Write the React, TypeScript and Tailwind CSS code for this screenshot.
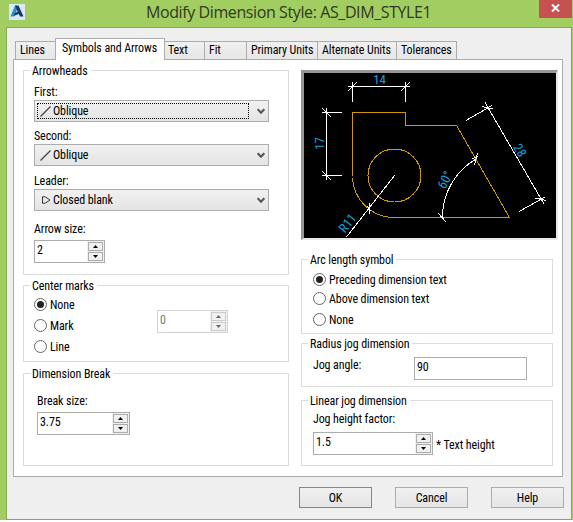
import { useState } from "react";

const leaderIcon = (
    <svg width="10" height="8" viewBox="0 0 10 8" fill="none" stroke="#333">
        <path d="M1.5 .7V7.3L4.5 7 9 4 4.5 1Z" />
    </svg>
);

const obliqueIcon = (
    <svg width="11" height="11" viewBox="0 0 11 11" stroke="#444" strokeWidth="1.2">
        <path d="M.5 10.5L10.5 .5" />
    </svg>
);

function Group({ title, className, children }: { title: string; className: string; children: React.ReactNode }) {
    return (
        <section className={`border border-[#dcdcdc] ${className}`}>
            <h2 className="-mt-2 ml-1.5 h-4 w-fit bg-white pr-[3px] pl-[2px]">{title}</h2>
            {children}
        </section>
    );
}

function Combo({ label, value, icon, focused }: { label: string; value: string; icon: React.ReactNode; focused?: boolean }) {
    return (
        <div>
            <div className="h-4">{label}</div>
            <button className="flex h-[22px] w-[235px] items-center border border-[#acacac] bg-linear-to-b from-[#f1f1f1] to-[#e4e4e4] pr-[3px] pl-[2px]">
                <span className={`flex h-4 w-[212px] items-center border ${focused ? "border-dotted border-black" : "border-transparent"}`}>
                    <span className="flex w-[15px] justify-center">{icon}</span>
                    <span>{value}</span>
                </span>
                <svg className="ml-auto" width="8" height="7" viewBox="0 0 8 7" fill="none" stroke="#555" strokeWidth="2">
                    <path d="M.7 1.2L4 4.8 7.3 1.2" />
                </svg>
            </button>
        </div>
    );
}

function Spinner({ value, width, disabled }: { value: string; width: string; disabled?: boolean }) {
    const arrow = disabled ? "#666" : "#000";
    return (
        <div className={`flex h-[23px] border bg-white ${width} ${disabled ? "border-[#d4d4d4] text-[#777]" : "border-[#acacac]"}`}>
            <span className="min-w-0 flex-1 pt-px pl-[2px]">{value}</span>
            <div className="flex w-[17px] flex-col gap-px bg-[#f0f0f0] p-px">
                <span className={`flex h-[9px] items-center justify-center border ${disabled ? "border-[#ccc]" : "border-[#acacac]"}`}>
                    <svg width="5" height="3"><path d="M0 3L2.5 0 5 3Z" fill={arrow} /></svg>
                </span>
                <span className={`flex h-[9px] items-center justify-center border ${disabled ? "border-[#ccc]" : "border-[#acacac]"}`}>
                    <svg width="5" height="3"><path d="M0 0L2.5 3 5 0Z" fill={arrow} /></svg>
                </span>
            </div>
        </div>
    );
}

function Radio({ label, checked, onSelect }: { label: string; checked: boolean; onSelect: () => void }) {
    return (
        <button role="radio" aria-checked={checked} onClick={onSelect} className="flex h-[15px] items-center gap-[3px]">
            <span className="flex size-[13px] items-center justify-center rounded-full border border-[#666] bg-white">
                {checked && <span className="size-[7px] rounded-full bg-[#222]" />}
            </span>
            <span>{label}</span>
        </button>
    );
}

function Preview() {
    return (
        <div className="h-[170px] w-[257px] border-t-3 border-r-2 border-b-2 border-l-3 border-t-[#969696] border-r-[#e8e8e8] border-b-[#e8e8e8] border-l-[#969696] bg-black">
            <svg className="block" width="252" height="165" viewBox="304 73 252 165" fill="none" shapeRendering="crispEdges">
                <g stroke="#cc9900">
                    <path d="M352.5 175.5V112.5H405.5V125.5H456.5L509.5 217.5H390.5A42 42 0 0 1 352.5 178" />
                    <circle cx="394.5" cy="175.5" r="26.5" />
                </g>
                <g stroke="#fff">
                    {/* horizontal */}
                    <path d="M348 86.5H410M352.5 82V102M405.5 82V102M348 91L357 82M401 91L410 82" />
                    {/* vertical */}
                    <path d="M326.5 108V180M322 112.5H342M322 175.5H342M322 108L331 117M322 171L331 180" />
                    {/* radius */}
                    <path d="M394.5 175.5L346.5 237M369.5 203V214M367 206L371 211" />
                    {/* aligned */}
                    <path d="M485 102.5L544 204M466 120.5L492 105.5M519 211.5L545 197M482 106.5L493 109M535 198L546 200.5" />
                    {/* angular */}
                    <path d="M442.5 217.5A67 67 0 0 1 476 159M438 213L446 222M477.5 153L474.5 165M472 159L478 156" />
                </g>
                <g fill="#12a2e0" fontFamily="Roboto, sans-serif" fontWeight="400" fontSize="13" textAnchor="middle">
                    <text x="379.5" y="84">14</text>
                    <text transform="translate(324 143.5) rotate(-90)">17</text>
                    <text transform="translate(351 226) rotate(-52)">R11</text>
                    <text transform="translate(516 152.5) rotate(60)">28</text>
                    <text transform="translate(449 182) rotate(-62)">60°</text>
                </g>
            </svg>
        </div>
    );
}

const tabs = [
    { name: "Lines", size: "w-[41px] pl-1" },
    { name: "Symbols and Arrows", size: "w-[110px] pl-1.5" },
    { name: "Text", size: "w-[41px] pl-[3px]" },
    { name: "Fit", size: "w-[43px] pl-1" },
    { name: "Primary Units", size: "w-[72px] pl-1" },
    { name: "Alternate Units", size: "w-[80px] pl-1" },
    { name: "Tolerances", size: "w-[61px] pl-1" },
];

export default function App() {
    const [tab, setTab] = useState("Symbols and Arrows");
    const [center, setCenter] = useState("None");
    const [arc, setArc] = useState("Preceding dimension text");

    return (
        <div className="h-[522px] w-[573px] overflow-hidden bg-white font-['Roboto',sans-serif] text-[12px] leading-4 tracking-[-0.1px] [font-stretch:86%] whitespace-nowrap text-black">
            <div className="h-[520px] bg-[#a2cd60] pr-px pl-1.5">
                <header className="flex h-[27px] items-start">
                    <svg className="mt-1 ml-[3px] shrink-0" width="16" height="16" viewBox="0 0 16 16">
                        <path d="M0 0H16V16H0Z" fill="#dce8f5" />
                        <path d="M6 1.5L1.5 12.5H5L9 3Z" fill="#2b8fc0" />
                        <path d="M6 1.5H9.5L14.5 12.5H11L9.8 10 4.5 12 5.5 9 8.6 7.8Z" fill="#123c70" />
                    </svg>
                    <h1 className="flex-1 pl-[121px] font-['Open_Sans',sans-serif] text-[16px] leading-[25px] tracking-[-0.4px] text-[#30391f] [font-stretch:100%]">
                        Modify Dimension Style: AS_DIM_STYLE1
                    </h1>
                    <button className="flex h-[18px] w-[33px] shrink-0 items-center justify-center bg-[#c75050] pb-[2px]">
                        <svg width="9" height="8" viewBox="0 0 9 8" stroke="#fff" strokeWidth="2">
                            <path d="M1 .5L8 7.5M8 .5L1 7.5" />
                        </svg>
                    </button>
                </header>

                <main className="h-[493px] border border-[#86ab4d] bg-[#efefef] pt-[11px] pl-1.5">
                    <nav className="ml-[2px] flex h-5 items-end">
                        {tabs.map((t) => (
                            <button
                                key={t.name}
                                onClick={() => setTab(t.name)}
                                className={`${t.size} -mr-px flex shrink-0 border border-[#acacac] ${
                                    t.name === tab
                                        ? "relative -mb-px h-[22px] border-b-0 bg-white pt-px"
                                        : "h-[18px] border-b-0 bg-linear-to-b from-[#f0f0f0] to-[#e6e6e6]"
                                }`}
                            >
                                {t.name}
                            </button>
                        ))}
                    </nav>

                    <div className="flex h-[418px] w-[550px] gap-3 border border-[#acacac] bg-white pt-2.5 pl-[9px]">
                        <div className="w-[266px]">
                            <Group title="Arrowheads" className="h-[205px]">
                                <div className="mt-[5px] flex flex-col pl-2.5">
                                    <Combo label="First:" value="Oblique" icon={obliqueIcon} focused />
                                    <div className="mt-1.5">
                                        <Combo label="Second:" value="Oblique" icon={obliqueIcon} />
                                    </div>
                                    <div className="mt-[7px]">
                                        <Combo label="Leader:" value="Closed blank" icon={leaderIcon} />
                                    </div>
                                </div>
                                <div className="mt-[10px] pl-2.5">
                                    <div className="mb-[3px]">Arrow size:</div>
                                    <Spinner value="2" width="w-[71px]" />
                                </div>
                            </Group>

                            <Group title="Center marks" className="mt-2.5 h-[77px]">
                                <div className="mt-[3px] flex pl-2.5">
                                    <div className="flex w-[123px] flex-col gap-1.5">
                                        {["None", "Mark", "Line"].map((c) => (
                                            <Radio key={c} label={c} checked={center === c} onSelect={() => setCenter(c)} />
                                        ))}
                                    </div>
                                    <div className="pt-[13px]">
                                        <Spinner value="0" width="w-[71px]" disabled />
                                    </div>
                                </div>
                            </Group>

                            <Group title="Dimension Break" className="mt-[11px] h-[93px]">
                                <div className="mt-[11px] pl-[13px]">
                                    <div className="mb-[3px]">Break size:</div>
                                    <Spinner value="3.75" width="w-[93px]" />
                                </div>
                            </Group>
                        </div>

                        <div className="w-[252px]">
                            <Preview />

                            <Group title="Arc length symbol" className="mt-[19px] h-[75px]">
                                <div className="mt-1 flex flex-col gap-1 pl-[11px]">
                                    <Radio label="Preceding dimension text" checked={arc === "Preceding dimension text"} onSelect={() => setArc("Preceding dimension text")} />
                                    <Radio label="Above dimension text" checked={arc === "Above dimension text"} onSelect={() => setArc("Above dimension text")} />
                                    <div className="pt-[2px]">
                                        <Radio label="None" checked={arc === "None"} onSelect={() => setArc("None")} />
                                    </div>
                                </div>
                            </Group>

                            <Group title="Radius jog dimension" className="mt-[9px] h-[44px]">
                                <div className="mt-[5px] flex pl-[11px]">
                                    <span className="w-[101px]">Jog angle:</span>
                                    <span className="h-[23px] w-[113px] border border-[#acacac] pt-px pl-[2px]">90</span>
                                </div>
                            </Group>

                            <Group title="Linear jog dimension" className="mt-[13px] h-[66px]">
                                <div className="mt-[2px] pl-[11px]">
                                    <div className="mb-[5px]">Jog height factor:</div>
                                    <div className="flex items-center gap-[3px]">
                                        <Spinner value="1.5" width="w-[120px]" />
                                        <span className="pt-[3px]">* Text height</span>
                                    </div>
                                </div>
                            </Group>
                        </div>
                    </div>

                    <footer className="mt-2.5 flex gap-[23px] pl-[286px]">
                        <button className="h-[21px] w-[73px] border border-[#3399ff] bg-linear-to-b from-[#f0f0f0] to-[#e5e5e5]">OK</button>
                        <button className="h-[21px] w-[73px] border border-[#acacac] bg-linear-to-b from-[#f0f0f0] to-[#e5e5e5]">Cancel</button>
                        <button className="h-[21px] w-[73px] border border-[#acacac] bg-linear-to-b from-[#f0f0f0] to-[#e5e5e5]">Help</button>
                    </footer>
                </main>
            </div>
        </div>
    );
}
